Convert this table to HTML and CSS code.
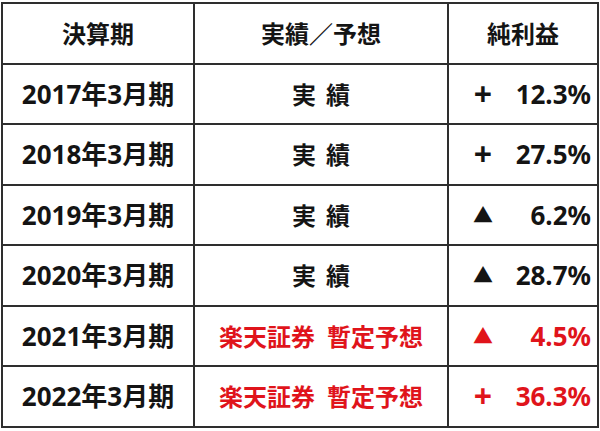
FILE: index.html
```html
<!DOCTYPE html>
<html lang="ja">
<head>
<meta charset="utf-8">
<link rel="stylesheet" href="styles.css">
</head>
<body>
<table class="tbl">
  <colgroup>
    <col class="c1"><col class="c2"><col class="c3">
  </colgroup>
  <thead>
    <tr><th>決算期</th><th>実績／予想</th><th>純利益</th></tr>
  </thead>
  <tbody>
    <tr><td class="year">2017年3月期</td><td class="kind">実<span class="sp"></span>績</td><td class="pct"><div class="pw"><span class="sign">+</span><span>12.3%</span></div></td></tr>
    <tr><td class="year">2018年3月期</td><td class="kind">実<span class="sp"></span>績</td><td class="pct"><div class="pw"><span class="sign">+</span><span>27.5%</span></div></td></tr>
    <tr><td class="year">2019年3月期</td><td class="kind">実<span class="sp"></span>績</td><td class="pct"><div class="pw"><span class="sign tri">▲</span><span>6.2%</span></div></td></tr>
    <tr><td class="year">2020年3月期</td><td class="kind">実<span class="sp"></span>績</td><td class="pct"><div class="pw"><span class="sign tri">▲</span><span>28.7%</span></div></td></tr>
    <tr class="red"><td class="year">2021年3月期</td><td class="kind">楽天証券<span class="sp2"></span>暫定予想</td><td class="pct"><div class="pw"><span class="sign tri">▲</span><span>4.5%</span></div></td></tr>
    <tr class="red"><td class="year">2022年3月期</td><td class="kind">楽天証券<span class="sp2"></span>暫定予想</td><td class="pct"><div class="pw"><span class="sign">+</span><span>36.3%</span></div></td></tr>
  </tbody>
</table>
</body>
</html>
```
FILE: styles.css
```css
html, body {
  margin: 0;
  padding: 0;
  background: #ffffff;
}
body {
  padding: 2px 0 0 1px;
  font-family: "Noto Sans", "Noto Sans CJK JP", sans-serif;
  font-weight: 700;
  color: #141414;
}
.tbl {
  border-collapse: collapse;
  table-layout: fixed;
  width: 596px;
}
.c1 { width: 192px; }
.c2 { width: 254px; }
.c3 { width: 150px; }
.tbl tr {
  height: 60.5px;
}
.tbl th, .tbl td {
  border: 2px solid #2e2e2e;
  padding: 0;
  text-align: center;
  vertical-align: middle;
  line-height: 1;
}
.tbl th {
  font-size: 24px;
  font-family: "Noto Sans CJK JP", sans-serif;
  font-weight: 700;
}
.year {
  font-size: 26px;
  font-family: "Noto Sans", "Noto Sans CJK JP", sans-serif;
}
.kind {
  font-size: 24px;
  font-family: "Noto Sans CJK JP", sans-serif;
}
.sp { display: inline-block; width: 10px; }
.sp2 { display: inline-block; width: 12px; }
.pct {
  font-size: 26px;
}
.pw {
  display: flex;
  justify-content: space-between;
  align-items: center;
  padding: 0 6px 0 24px;
}
.sign {
  font-family: "Noto Sans", sans-serif;
  font-size: 32px;
  font-weight: 700;
  width: 20px;
  text-align: center;
}
.tri {
  font-family: "Noto Sans CJK JP", sans-serif;
  font-size: 20px;
}
.red { color: #e0141b; }
.red .year { color: #141414; }
```
